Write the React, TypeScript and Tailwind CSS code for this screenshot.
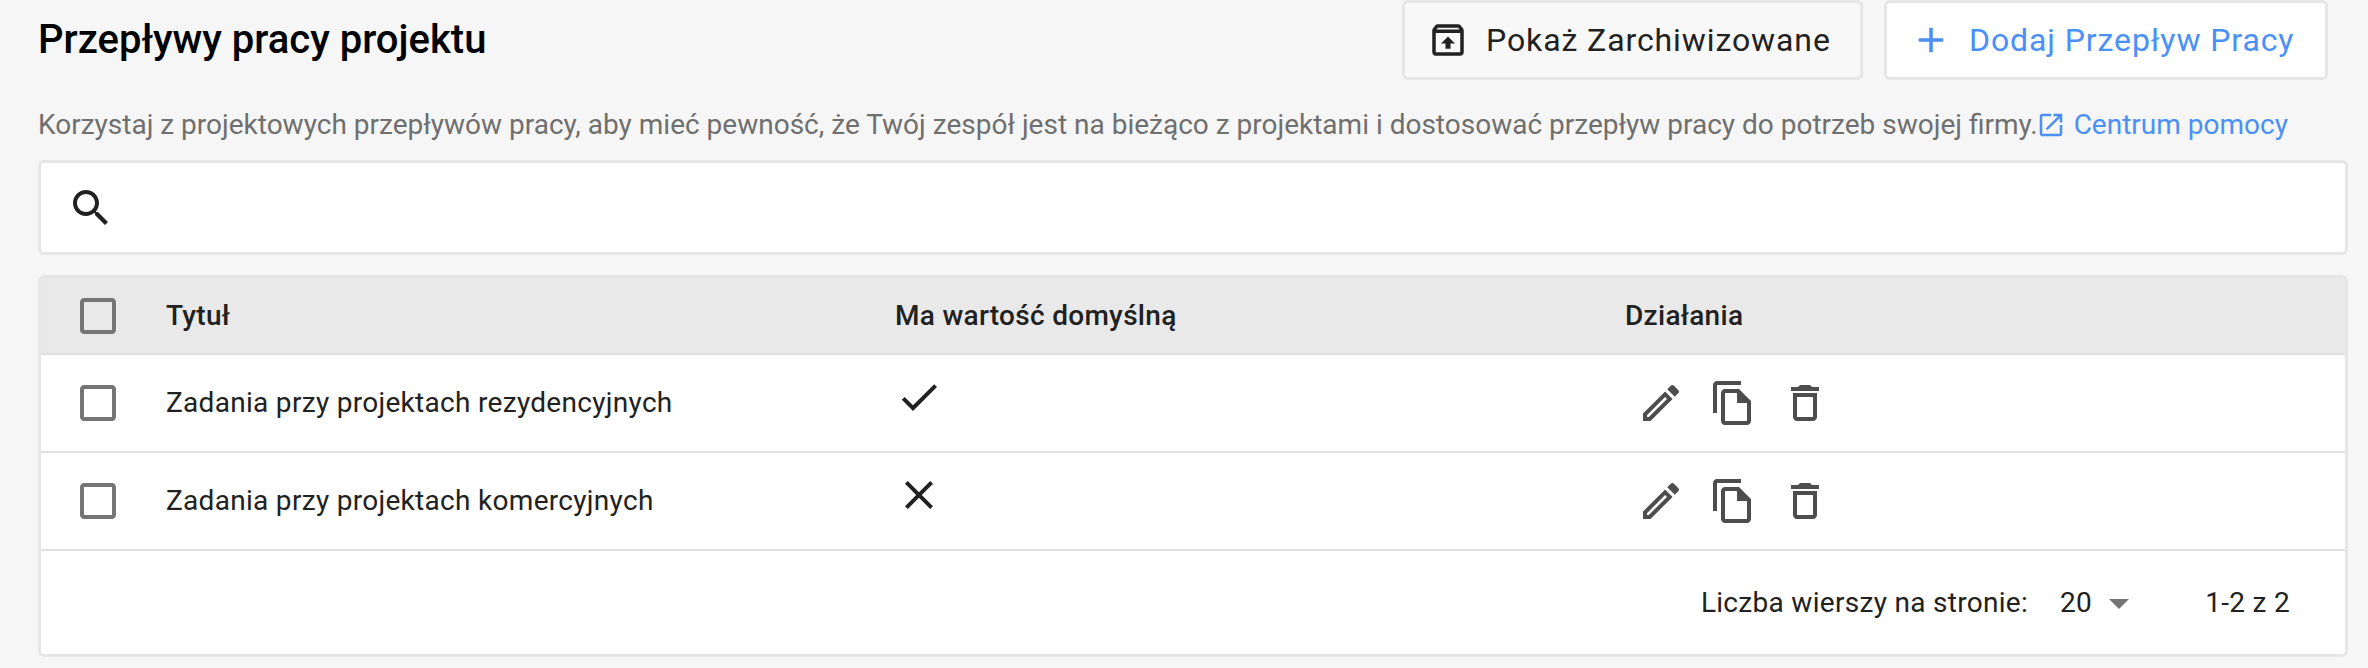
const paths = {
  search:
    "M15.5 14h-.79l-.28-.27C15.41 12.59 16 11.11 16 9.5 16 5.91 13.09 3 9.5 3S3 5.91 3 9.5 5.91 16 9.5 16c1.61 0 3.09-.59 4.23-1.57l.27.28v.79l5 4.99L20.49 19l-4.99-5zm-6 0C7.01 14 5 11.99 5 9.5S7.01 5 9.5 5 14 7.01 14 9.5 11.99 14 9.5 14z",
  edit: "M14.06 9.02l.92.92L5.92 19H5v-.92l9.06-9.06M17.66 3c-.25 0-.51.1-.7.29l-1.83 1.83 3.75 3.75 1.83-1.83c.39-.39.39-1.02 0-1.41l-2.34-2.34c-.2-.2-.45-.29-.71-.29zm-3.6 3.19L3 17.25V21h3.75L17.81 9.94l-3.75-3.75z",
  copy: "M16 1H4c-1.1 0-2 .9-2 2v14h2V3h12V1zm-1 4H8c-1.1 0-1.99.9-1.99 2L6 21c0 1.1.89 2 1.99 2H19c1.1 0 2-.9 2-2V11l-6-6zM8 21V7h6v5h5v9H8z",
  trash: "M16 9v10H8V9h8m-1.5-6h-5l-1 1H5v2h14V4h-3.5l-1-1zM18 7H6v12c0 1.1.9 2 2 2h8c1.1 0 2-.9 2-2V7z",
  check: "M9 16.17L4.83 12l-1.42 1.41L9 19 21 7l-1.41-1.41z",
  close: "M19 6.41L17.59 5 12 10.59 6.41 5 5 6.41 10.59 12 5 17.59 6.41 19 12 13.41 17.59 19 19 17.59 13.41 12z",
  box: "M19 5v14H5V5h14m0-2H5c-1.1 0-2 .9-2 2v14c0 1.1.9 2 2 2h14c1.1 0 2-.9 2-2V5c0-1.1-.9-2-2-2z",
  unarchive:
    "M20.54 5.23l-1.39-1.68C18.88 3.21 18.47 3 18 3H6c-.47 0-.88.21-1.16.55L3.46 5.23C3.17 5.57 3 6.02 3 6.5V19c0 1.1.9 2 2 2h14c1.1 0 2-.9 2-2V6.5c0-.48-.17-.93-.46-1.27zM6.24 5h11.52l.83 1H5.42l.82-1zM5 19V8h14v11H5zm3-5h2.55v3h2.9v-3H16l-4-4z",
  add: "M19 13h-6v6h-2v-6H5v-2h6V5h2v6h6v2z",
  open: "M19 19H5V5h7V3H5c-1.11 0-2 .9-2 2v14c0 1.1.89 2 2 2h14c1.1 0 2-.9 2-2v-7h-2v7zM14 3v2h3.59l-9.83 9.83 1.41 1.41L19 6.41V10h2V3h-7z",
  drop: "M7 10l5 5 5-5z",
};

function Icon({ d, className }: { d: string; className: string }) {
  return (
    <svg viewBox="0 0 24 24" fill="currentColor" className={className}>
      <path d={d} />
    </svg>
  );
}

const rows = [
  { title: "Zadania przy projektach rezydencyjnych", icon: paths.check },
  { title: "Zadania przy projektach komercyjnych", icon: paths.close },
];

export default function App() {
  return (
    <div className="h-[668px] w-[2368px] overflow-hidden bg-[#f6f6f6] pl-[38px] pr-[30px] font-['Roboto',sans-serif] text-[28px] text-[#212121]">
      <div className="mr-[10px] flex h-[80px] items-center">
        <h1 className="text-[40px] font-medium text-black">Przepływy pracy projektu</h1>
        <button className="ml-auto flex h-[80px] w-[461px] items-center rounded-[6px] border-[3px] border-[#e6e6e6] bg-[#f8f8f8] pl-[22px] text-[32px] tracking-[0.9px]">
          <Icon d={paths.unarchive} className="mr-[17px] h-[42px] w-[42px]" />
          Pokaż Zarchiwizowane
        </button>
        <button className="ml-[21px] flex h-[80px] w-[444px] items-center rounded-[6px] border-[3px] border-[#e6e6e6] bg-white pl-[23px] text-[32px] tracking-[0.9px] text-[#4a90f7]">
          <Icon d={paths.add} className="mr-[17px] h-[42px] w-[42px]" />
          Dodaj Przepływ Pracy
        </button>
      </div>
      <div className="mr-[-10px] flex h-[80px] items-center pt-[10px] text-[#6f6f6f]">
        <span>
          Korzystaj z projektowych przepływów pracy, aby mieć pewność, że Twój zespół jest na bieżąco z projektami i dostosować przepływ pracy do potrzeb swojej firmy.
        </span>
        <span className="ml-[-2px] flex items-center text-[#4a90f7]">
          <Icon d={paths.open} className="mr-[8px] h-[30px] w-[30px]" />
          Centrum pomocy
        </span>
      </div>
      <div className="mr-[-10px] flex h-[95px] items-center rounded-[6px] border-[3px] border-[#e6e6e6] bg-white pl-[26px]">
        <Icon d={paths.search} className="h-[48px] w-[48px]" />
      </div>
      <div className="mr-[-10px] mt-[20px] overflow-hidden rounded-[6px] border-[3px] border-[#e6e6e6] bg-white tracking-[0.3px]">
        <div className="grid h-[75px] grid-cols-[125px_729px_730px_1fr] items-center bg-[#e9e9e9] pt-[1px] font-medium">
          <div className="pl-[33px] text-[#757575]">
            <Icon d={paths.box} className="h-[48px] w-[48px]" />
          </div>
          <div>Tytuł</div>
          <div>Ma wartość domyślną</div>
          <div>Działania</div>
        </div>
        {rows.map((row) => (
          <div
            key={row.title}
            className="grid h-[98px] grid-cols-[125px_729px_730px_1fr] items-center border-t-2 border-[#e0e0e0]"
          >
            <div className="pl-[33px] text-[#757575]">
              <Icon d={paths.box} className="h-[48px] w-[48px]" />
            </div>
            <div>{row.title}</div>
            <div className="pb-[12px]">
              <Icon d={row.icon} className="h-[48px] w-[48px]" />
            </div>
            <div className="flex text-[#4d4d4d]">
              <button className="p-[12px]">
                <Icon d={paths.edit} className="h-[48px] w-[48px]" />
              </button>
              <button className="p-[12px]">
                <Icon d={paths.copy} className="h-[48px] w-[48px]" />
              </button>
              <button className="p-[12px]">
                <Icon d={paths.trash} className="h-[48px] w-[48px]" />
              </button>
            </div>
          </div>
        ))}
        <div className="flex h-[105px] items-center justify-end border-t-2 border-[#e0e0e0] pr-[55px]">
          <span>Liczba wierszy na stronie:</span>
          <span className="ml-[32px]">20</span>
          <Icon d={paths.drop} className="ml-[3px] h-[48px] w-[48px] text-[#757575]" />
          <span className="ml-[62px]">1-2 z 2</span>
        </div>
      </div>
    </div>
  );
}
